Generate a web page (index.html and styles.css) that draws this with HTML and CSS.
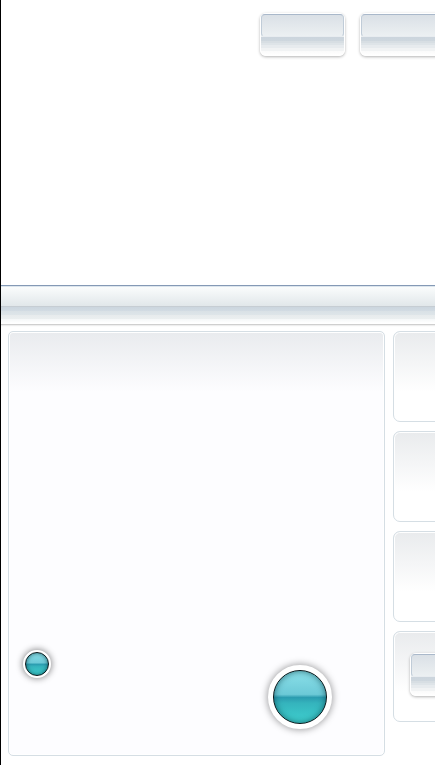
FILE: index.html
```html
<!DOCTYPE html>
<html lang="en">
<head>
<meta charset="utf-8">
<meta name="viewport" content="width=device-width, initial-scale=1">
<title>Control panel</title>
<link rel="stylesheet" href="styles.css">
</head>
<body>
<div class="page">
  <header class="header">
    <button class="button" type="button" aria-label="Primary action"></button>
    <button class="button button-wide" type="button" aria-label="Secondary action"></button>
  </header>
  <nav class="bar" aria-label="Toolbar"></nav>
  <main class="content">
    <section class="panel panel-main">
      <div class="orbs">
        <button class="orb orb-small" type="button" aria-label="Small control"></button>
        <button class="orb orb-large" type="button" aria-label="Large control"></button>
      </div>
    </section>
    <aside class="cards">
      <section class="panel card"></section>
      <section class="panel card"></section>
      <section class="panel card"></section>
      <section class="panel card">
        <button class="button" type="button" aria-label="Card action"></button>
      </section>
    </aside>
  </main>
</div>
</body>
</html>
```

FILE: styles.css
```css
*,
*::before {
  box-sizing: border-box;
}

body {
  margin: 0;
  background: #fff;
  font-family: "Liberation Sans", sans-serif;
}

.page {
  min-height: 100vh;
  border-left: 1px solid #000;
  overflow: hidden;
}

.header {
  display: flex;
  align-items: flex-start;
  gap: 15px;
  min-height: 285px;
  padding: 13px 0 0 259px;
}

.button {
  flex: none;
  position: relative;
  width: 85px;
  height: 43px;
  padding: 0;
  border: 1px solid #fff;
  border-radius: 6px;
  background: linear-gradient(
    #dce3e8 0, #ecf0f2 23px,
    #ccd5dd 23px, #ced7de 27px,
    #d7dee3 27px, #d7dee3 29px,
    #dee4e8 29px, #dee4e8 31px,
    #e7ebee 31px, #e7ebee 34px,
    #f1f3f4 34px, #f1f3f4 37px,
    #fafafa 37px, #fff);
  background-clip: padding-box;
  box-shadow: 0 1px 3px rgba(0, 0, 0, 0.3);
}

/* Glossy upper half */
.button::before {
  content: "";
  position: absolute;
  inset: 0 0 auto;
  height: 23px;
  border: 1px solid #c0ccd8;
  border-top-color: #a9b8ca;
  border-bottom-color: #e8ecf0;
  border-radius: 4px;
  background: linear-gradient(#dae0e6, #ecf0f2);
}

.button-wide {
  width: 120px;
}

.bar {
  height: 40px;
  border-top: 1px solid #8499b5;
  border-bottom: 1px solid #cfcfcf;
  background: linear-gradient(
    #dce5ed 0, #dce5ed 1px,
    #fafcfc 1px, #e1e7ea 20px,
    #c6cdd3 20px, #c6cdd3 21px,
    #cbd5de 21px, #d2dbe3 25px,
    #d9e1e6 25px, #dee5e9 29px,
    #e7ebed 29px, #ebeff0 33px,
    #f5f7f8 33px, #fff 37px);
  box-shadow: 0 1px 1px #eee;
}

.content {
  display: grid;
  grid-template-columns: 377px minmax(377px, 1fr);
  gap: 8px;
  padding: 6px 7px 9px;
}

.panel {
  border: 1px solid #d5dee4;
  border-radius: 5px;
  box-shadow: inset 0 0 0 1px #fff;
}

.panel-main {
  display: flex;
  min-height: 425px;
  padding: 0 52px 26px 14px;
  background: linear-gradient(#e9ebee, #fdfdff 60px);
}

.orbs {
  display: flex;
  flex: 1;
  align-self: flex-end;
  align-items: flex-start;
  justify-content: space-between;
}

.orb {
  display: flex;
  padding: 0;
  border: 0 solid #fff;
  border-radius: 50%;
  background: #fff;
}

.orb::before {
  content: "";
  flex: 1;
  align-self: stretch;
  border: 1px solid #061518;
  border-radius: 50%;
  background: linear-gradient(#8be0e9, #6cc9d7 45%, #2b9cb0 51%, #35b4bd 62%, #3fd0cf);
}

.orb-small {
  width: 28px;
  height: 28px;
  border-width: 2px;
  box-shadow: 0 0 6px 1px rgba(0, 0, 0, 0.42);
}

.orb-small::before {
  box-shadow: inset 0 0 4px rgba(0, 50, 60, 0.7);
}

.orb-large {
  width: 64px;
  height: 64px;
  margin-top: 15px;
  border-width: 5px;
  box-shadow: 0 0 7px 1px rgba(0, 0, 0, 0.36);
}

.orb-large::before {
  box-shadow: inset 0 0 6px rgba(0, 55, 65, 0.65);
}

.cards {
  display: flex;
  flex-direction: column;
  align-self: start;
  gap: 9px;
}

.card {
  min-height: 91px;
  padding: 21px 16px;
  border-radius: 7px;
  background: linear-gradient(#e9ebed, #fff 60px);
}
```
